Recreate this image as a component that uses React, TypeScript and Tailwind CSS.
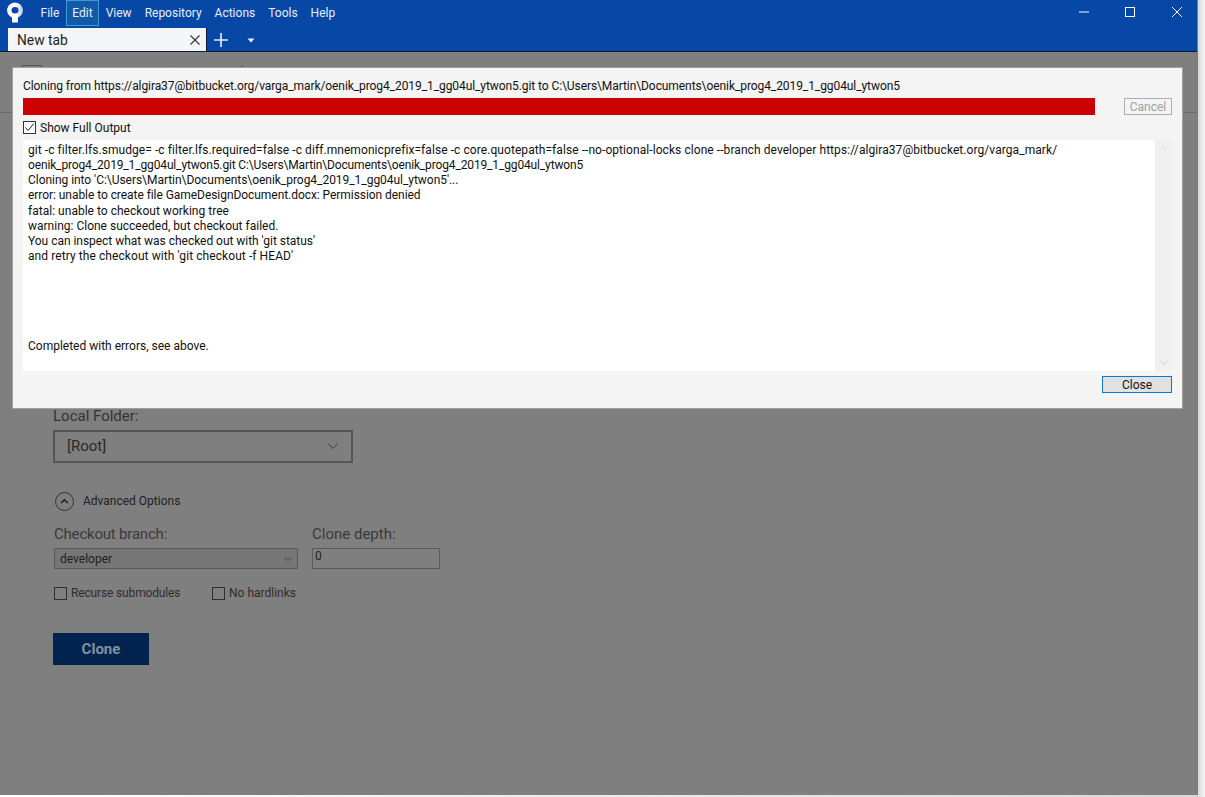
import React from "react";

const font = { fontFamily: 'Roboto, "Noto Sans", sans-serif' };

const outputLines = [
  { t: "git -c filter.lfs.smudge= -c filter.lfs.required=false -c diff.mnemonicprefix=false -c core.quotepath=false --no-optional-locks clone --branch developer https://algira37@bitbucket.org/varga_mark/", c: "tracking-[0.07px]" },
  { t: "oenik_prog4_2019_1_gg04ul_ytwon5.git C:\\Users\\Martin\\Documents\\oenik_prog4_2019_1_gg04ul_ytwon5", c: "tracking-[-0.144px]" },
  { t: "Cloning into 'C:\\Users\\Martin\\Documents\\oenik_prog4_2019_1_gg04ul_ytwon5'...", c: "tracking-[-0.04px]" },
  { t: "error: unable to create file GameDesignDocument.docx: Permission denied", c: "tracking-[-0.055px]" },
  { t: "fatal: unable to checkout working tree", c: "tracking-[0.02px]" },
  { t: "warning: Clone succeeded, but checkout failed.", c: "" },
  { t: "You can inspect what was checked out with 'git status'", c: "tracking-[-0.03px]" },
  { t: "and retry the checkout with 'git checkout -f HEAD'", c: "tracking-[0.08px]" },
];

function Logo() {
  return (
    <svg width="18" height="22" viewBox="0 0 18 22" className="ml-[6px] mt-[1px] shrink-0">
      <defs>
        <linearGradient id="logoFade" x1="0" y1="0" x2="1" y2="0">
          <stop offset="0.55" stopColor="#ffffff" />
          <stop offset="1" stopColor="#b9cbe6" />
        </linearGradient>
      </defs>
      <path
        fill="url(#logoFade)"
        fillRule="evenodd"
        d="M9 1.500a8 7.800 0 0 1 3 15V21.500H6V16.500A8 7.800 0 0 1 9 1.500zM9 6a3.500 3.300 0 1 0 0 6.600 3.500 3.300 0 0 0 0-6.600z"
      />
    </svg>
  );
}

function MenuItem({ label, active }: { label: string; active?: boolean }) {
  return (
    <div
      className={
        active
          ? "flex h-[26px] items-center border border-[#3f9ad6] bg-[#1259a8] px-[5.500px] text-[#e8eef7]"
          : "flex h-[26px] items-center border border-transparent px-[5.500px] text-[#e8eef7]"
      }
    >
      {label}
    </div>
  );
}

function Check({ checked, dim }: { checked?: boolean; dim?: boolean }) {
  return (
    <span
      className={
        dim
          ? "flex h-[13px] w-[13px] shrink-0 border border-[#2f2f2f]"
          : "flex h-[13px] w-[13px] shrink-0 items-center justify-center border border-[#333] bg-white"
      }
    >
      {checked && (
        <svg width="11" height="11" viewBox="0 0 11 11">
          <path d="M1.5 5.500 4.200 8.500 9.800 1.500" fill="none" stroke="#222" strokeWidth="1" />
        </svg>
      )}
    </span>
  );
}

function Chevron({ up, color, size = 10 }: { up?: boolean; color: string; size?: number }) {
  return (
    <svg width={size} height={size} viewBox="0 0 10 10">
      <path d={up ? "M1 7 5 3 9 7" : "M1 3 5 7 9 3"} fill="none" stroke={color} strokeWidth="1" />
    </svg>
  );
}

export default function App() {
  return (
    <div className="relative flex h-[797px] w-[1205px] overflow-hidden bg-[#f0f0f0] text-[12px]" style={font}>
      <div className="flex h-[795px] w-[1198px] shrink-0 flex-col border-r border-[#5d84b0]">
        {/* Title bar */}
        <div className="h-[52px] shrink-0 border-b border-b-[#0b1a33] bg-[#0747a6]">
          <div className="flex h-[28px] items-start">
            <Logo />
            <div className="ml-[10px] flex text-[12px]">
              <MenuItem label="File" />
              <MenuItem label="Edit" active />
              <MenuItem label="View" />
              <MenuItem label="Repository" />
              <MenuItem label="Actions" />
              <MenuItem label="Tools" />
              <MenuItem label="Help" />
            </div>
            <div className="ml-auto flex items-center pt-[5px]">
              <svg width="14" height="14" viewBox="0 0 14 14" className="mr-[32px]">
                <path d="M2 7h10" stroke="#fff" strokeWidth="1" />
              </svg>
              <svg width="14" height="14" viewBox="0 0 14 14" className="mr-[33px]">
                <rect x="2.5" y="2.5" width="9" height="9" fill="none" stroke="#fff" strokeWidth="1" />
              </svg>
              <svg width="14" height="14" viewBox="0 0 14 14" className="mr-[13px]">
                <path d="M2 2l10 10M12 2 2 12" stroke="#fff" strokeWidth="1" />
              </svg>
            </div>
          </div>
          <div className="flex h-[23px] items-center">
            <div className="ml-[8px] flex h-[23px] w-[199px] items-center justify-between border-r border-r-[#0b1a33] bg-[#f4f5f7] pl-[9px] pr-[5px] pt-[1px] text-[13.800px] text-[#222]">
              <span>New tab</span>
              <svg width="12" height="12" viewBox="0 0 12 12">
                <path d="M1.5 1.5l9 9M10.500 1.5l-9 9" stroke="#333" strokeWidth="1.1" />
              </svg>
            </div>
            <svg width="16" height="16" viewBox="0 0 16 16" className="ml-[6px] mt-[1px]">
              <path d="M8 1v14M1 8h14" stroke="#e8eef7" strokeWidth="1.6" />
            </svg>
            <svg width="8" height="5" viewBox="0 0 8 5" className="ml-[18px] mt-[2px]">
              <path d="M0.500 0.500h7L4 4.500z" fill="#e8eef7" />
            </svg>
          </div>
        </div>

        {/* Dimmed page */}
        <div className="flex-1 bg-[#7f7f7f] text-[#2e2e2e]">
          <div className="h-[61px] border-b border-b-[#6a6a6a] pl-[22px] pt-[13px]">
            <div className="flex items-start">
              <div className="h-[12px] w-[20px] border border-[#555]" />
              <div className="ml-[129px] h-[12px] w-px bg-[#6a6a6a]" />
              <div className="ml-[69px] mt-[1px] h-[3px] w-[2px] bg-[#4a5a70]" />
            </div>
          </div>
          <div className="pl-[53px] pt-[294px]">
            <div className="text-[15px] leading-[18px] text-[#333]">Local Folder:</div>
            <div className="mt-[5px] flex h-[33px] w-[300px] items-center justify-between border-2 border-[#555] pb-[1px] pl-[12px] pr-[12px] text-[15px] text-[#2a2a2a]">
              <span>[Root]</span>
              <Chevron color="#555" size={12} />
            </div>
            <div className="mt-[29px] flex h-[19px] items-center pl-[2px]">
              <span className="flex h-[19px] w-[19px] items-center justify-center rounded-full border border-[#333]">
                <svg width="9" height="7" viewBox="0 0 9 7">
                  <path d="M1 5 4.500 1.800 8 5" fill="none" stroke="#222" strokeWidth="1.600" />
                </svg>
              </span>
              <span className="ml-[9px] pb-[2px] text-[12px] text-[#222]">Advanced Options</span>
            </div>
            <div className="mt-[14px] flex pl-[1px]">
              <div className="w-[258px]">
                <div className="text-[15px] leading-[18px] tracking-[-0.2px] text-[#3a3a3a]">Checkout branch:</div>
                <div className="mt-[5px] flex h-[21px] w-[244px] items-center justify-between border border-[#5a5a5a] bg-[#767676] pl-[5px] pr-[5px] text-[12px] text-[#1f1f1f]">
                  <span>developer</span>
                  <Chevron color="#333" size={8} />
                </div>
              </div>
              <div>
                <div className="text-[15px] leading-[18px] text-[#3a3a3a]">Clone depth:</div>
                <div className="mt-[5px] h-[21px] w-[128px] border border-[#5a5a5a] pl-[2px] text-[12px] leading-[15px] text-[#1f1f1f]">0</div>
              </div>
            </div>
            <div className="mt-[17px] flex pl-[1px]">
              <div className="flex w-[158px] items-center">
                <Check dim />
                <span className="ml-[4px] leading-[14px] tracking-[-0.15px] text-[#332a2e]">Recurse submodules</span>
              </div>
              <div className="flex items-center">
                <Check dim />
                <span className="ml-[4px] leading-[14px] text-[#332a2e]">No hardlinks</span>
              </div>
            </div>
            <button className="mt-[33px] flex h-[32px] w-[96px] items-center justify-center bg-[#02234f] text-[15px] font-bold text-[#84919f]">
              Clone
            </button>
          </div>
        </div>
      </div>
      <div className="h-full flex-1 bg-gradient-to-r from-[#d8d8d8] to-[#f6f6f6]" />
      <div className="absolute bottom-0 left-0 h-[2px] w-[1198px] bg-gradient-to-r from-white to-[#d8d8d8]" />

      {/* Output dialog */}
      <div className="absolute left-[12px] top-[67px] flex h-[342px] w-[1171px] flex-col border border-[#a0a0a0] bg-[#f4f4f4] px-[10px] text-[#111]">
        <div className="mt-[9px] h-[18px] whitespace-nowrap leading-[18px] tracking-[-0.08px]">
          Cloning from https://algira37@bitbucket.org/varga_mark/oenik_prog4_2019_1_gg04ul_ytwon5.git to C:\Users\Martin\Documents\oenik_prog4_2019_1_gg04ul_ytwon5
        </div>
        <div className="mt-[3px] flex h-[17px] items-stretch">
          <div className="w-[1072px] bg-[#cc0000]" />
          <div className="ml-[29px] flex w-[48px] items-center justify-center border border-[#adadad] text-[#a0a0a0]">Cancel</div>
        </div>
        <div className="mt-[6px] flex h-[13px] items-center">
          <Check checked />
          <span className="ml-[4px]">Show Full Output</span>
        </div>
        <div className="mt-[6px] flex h-[231px]">
          <div className="flex-1 bg-white pl-[5px] pt-[3px] text-[#111]">
            {outputLines.map((l) => (
              <div key={l.t} className={`h-[15.150px] whitespace-nowrap leading-[15.150px] ${l.c}`}>{l.t}</div>
            ))}
            <div className="mt-[75px] leading-[15px]">Completed with errors, see above.</div>
          </div>
          <div className="flex w-[17px] flex-col items-center justify-between bg-[#f0f0f0] py-[4px]">
            <Chevron up color="#d6d6d6" size={9} />
            <Chevron color="#c8c8c8" size={9} />
          </div>
        </div>
        <div className="mt-[5px] flex justify-end">
          <div className="flex h-[17px] w-[70px] items-center justify-center border-[1.500px] border-[#0a78d4] bg-[#e1e1e1] text-[#111]">Close</div>
        </div>
      </div>
    </div>
  );
}
